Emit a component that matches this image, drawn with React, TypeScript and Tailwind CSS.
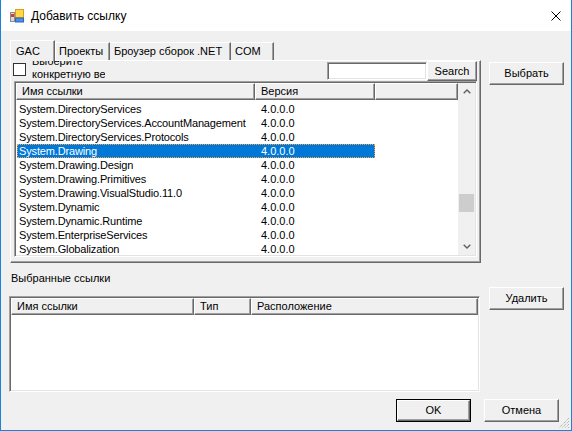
import React from 'react';

// классические 3D-рамки WinForms
const raised =
  'border border-t-white border-l-white border-r-[#696969] border-b-[#696969] shadow-[inset_-1px_-1px_0_#a0a0a0] bg-[#f0f0f0]';
const sunken =
  'border border-t-[#a0a0a0] border-l-[#a0a0a0] border-r-white border-b-white shadow-[inset_1px_1px_0_#696969,inset_-1px_-1px_0_#e3e3e3] p-px';

const assemblies = [
  'System.DirectoryServices',
  'System.DirectoryServices.AccountManagement',
  'System.DirectoryServices.Protocols',
  'System.Drawing',
  'System.Drawing.Design',
  'System.Drawing.Primitives',
  'System.Drawing.VisualStudio.11.0',
  'System.Dynamic',
  'System.Dynamic.Runtime',
  'System.EnterpriseServices',
  'System.Globalization',
];

function Chevron({ down }: { down?: boolean }) {
  return (
    <svg width="8" height="5" viewBox="0 0 8 5" className={down ? 'rotate-180' : ''}>
      <path d="M0.7 4.3 L4 1 L7.3 4.3" fill="none" stroke="#606060" strokeWidth="1.4" />
    </svg>
  );
}

function Button({ label, def, className = '' }: { label: string; def?: boolean; className?: string }) {
  if (def) {
    return (
      <div className={`w-[75px] h-[23px] border border-black ${className}`}>
        <div className={`h-full flex items-center justify-center ${raised}`}>{label}</div>
      </div>
    );
  }
  return (
    <div className={`w-[75px] h-[23px] flex items-center justify-center ${raised} ${className}`}>{label}</div>
  );
}

function HeaderCell({ label, className = '' }: { label?: string; className?: string }) {
  return (
    <div className={`h-full flex items-center pl-[5px] whitespace-nowrap overflow-hidden ${raised} ${className}`}>
      {label}
    </div>
  );
}

export default function App() {
  return (
    <div className="w-[572px] h-[431px] flex flex-col border-x border-b border-[#1883d7] bg-white overflow-hidden font-['Liberation_Sans',Arial,sans-serif] text-[11px] text-black">
      {/* Заголовок окна */}
      <div className="h-[31px] shrink-0 flex items-center pl-[8px] pr-[10px] bg-white">
        <svg width="16" height="16" viewBox="0 0 16 16">
          <rect x="1.5" y="4.5" width="4" height="9" fill="#d9d9d9" stroke="#8c8c8c" />
          <rect x="2" y="6" width="3" height="3" fill="#d83b3b" />
          <rect x="6.5" y="1.5" width="8" height="8" fill="#ffd84a" stroke="#e29a1a" />
          <rect x="6.5" y="10" width="8" height="4" fill="#4a8fe0" stroke="#2c67b8" />
        </svg>
        <span className="ml-[6px] text-[12px]">Добавить ссылку</span>
        <div className="flex-1" />
        <svg width="10" height="10" viewBox="0 0 10 10">
          <path d="M0.5 0.5 L9.5 9.5 M9.5 0.5 L0.5 9.5" stroke="#000" strokeWidth="1" />
        </svg>
      </div>

      {/* Клиентская область */}
      <div className="flex-1 bg-[#f0f0f0] relative flex flex-col">
        <div className="flex pt-[9px]">
          <div className="ml-[9px] w-[471px] flex flex-col">
            {/* Вкладки */}
            <div className="h-[20px] flex items-end">
              <div className="relative z-10 h-[21px] -mb-px w-[45px] flex items-center pl-[5px] bg-[#f0f0f0] border-t border-l border-r border-t-white border-l-white border-r-[#696969] shadow-[inset_-1px_0_0_#a0a0a0]">
                GAC
              </div>
              <div className="h-[18px] w-[55px] flex items-center pl-[3px] border-t border-l border-r border-t-white border-l-white border-r-[#696969] shadow-[inset_-1px_0_0_#a0a0a0]">
                Проекты
              </div>
              <div className="h-[18px] w-[121px] flex items-center pl-[4px] whitespace-nowrap border-t border-r border-t-white border-r-[#696969] shadow-[inset_-1px_0_0_#a0a0a0]">
                Броузер сборок .NET
              </div>
              <div className="h-[18px] w-[43px] flex items-center pl-[4px] border-t border-r border-t-white border-r-[#696969] shadow-[inset_-1px_0_0_#a0a0a0]">
                COM
              </div>
            </div>

            {/* Страница вкладки GAC */}
            <div className="h-[203px] border border-t-white border-l-white border-r-[#696969] border-b-[#696969] shadow-[inset_-1px_-1px_0_#a0a0a0] flex flex-col">
              <div className="h-[20px] flex items-start">
                <div className="ml-[2px] mt-[2px] w-[13px] h-[13px] border border-[#333333] bg-white" />
                <div className="ml-[6px] w-[73px] h-[19px] overflow-hidden">
                  <div className="-mt-[6px] leading-[13px] whitespace-nowrap">
                    <div>Выберите</div>
                    <div>конкретную версию</div>
                  </div>
                </div>
                <div className={`ml-auto mt-px w-[100px] h-[18px] bg-white ${sunken}`} />
                <div className={`w-[50px] h-[20px] mr-[3px] flex items-center justify-center ${raised}`}>Search</div>
              </div>

              {/* Список сборок */}
              <div className={`ml-[3px] w-[463px] h-[176px] bg-white flex overflow-hidden ${sunken}`}>
                <div className="flex-1 min-w-0 flex flex-col">
                  <div className="h-[17px] shrink-0 flex">
                    <HeaderCell label="Имя ссылки" className="w-[239px] pl-[4px]" />
                    <HeaderCell label="Версия" className="w-[120px]" />
                    <HeaderCell className="flex-1" />
                  </div>
                  <div className="pt-[2px] leading-[14px] tracking-[-0.15px]">
                    {assemblies.map((name, i) => {
                      const sel = i === 3;
                      return (
                        <div key={name} className="h-[14px] flex">
                          <div
                            className={`ml-px w-[358px] flex items-center ${
                              sel ? 'bg-[#0078d7] text-white outline-1 outline-dotted outline-[#ffa040] -outline-offset-1' : ''
                            }`}
                          >
                            <span className="w-[238px] pl-[2px] whitespace-nowrap overflow-hidden">{name}</span>
                            <span className="pl-[6px] tracking-normal">4.0.0.0</span>
                          </div>
                        </div>
                      );
                    })}
                  </div>
                </div>
                {/* Полоса прокрутки */}
                <div className="w-[17px] shrink-0 bg-[#f0f0f0] flex flex-col">
                  <div className="h-[17px] flex items-center justify-center">
                    <Chevron />
                  </div>
                  <div className="flex-1 pt-[94px]">
                    <div className="mx-px h-[18px] bg-[#cdcdcd]" />
                  </div>
                  <div className="h-[17px] flex items-center justify-center">
                    <Chevron down />
                  </div>
                </div>
              </div>
            </div>
          </div>

          <div className="ml-[8px] mt-[22px]">
            <Button label="Выбрать" />
          </div>
        </div>

        {/* Выбранные ссылки */}
        <div className="flex">
          <div className="ml-[8px] flex flex-col">
            <div className="mt-[8px] h-[14px] flex items-center pl-[2px]">Выбранные ссылки</div>
            <div className={`mt-[11px] w-[471px] h-[96px] bg-white flex flex-col ${sunken}`}>
              <div className="h-[17px] flex">
                <HeaderCell label="Имя ссылки" className="w-[183px]" />
                <HeaderCell label="Тип" className="w-[57px]" />
                <HeaderCell label="Расположение" className="flex-1" />
              </div>
            </div>
          </div>
          <div className="ml-[9px] mt-[24px]">
            <Button label="Удалить" />
          </div>
        </div>

        <div className="mt-[7px] flex pl-[395px]">
          <Button label="OK" def />
          <Button label="Отмена" className="ml-[13px]" />
        </div>

        {/* Уголок изменения размера */}
        <svg width="12" height="12" viewBox="0 0 12 12" className="absolute right-px bottom-px">
          <path d="M11 1 L1 11 M11 4 L4 11 M11 7 L7 11 M11 10 L10 11" stroke="#a0a0a0" strokeWidth="1" strokeDasharray="1 1" />
        </svg>
      </div>
    </div>
  );
}
